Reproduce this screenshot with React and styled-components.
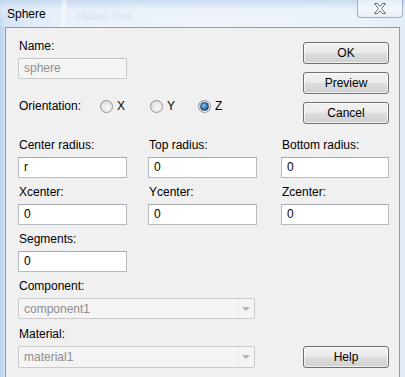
import styled, { createGlobalStyle } from "styled-components";

const Global = createGlobalStyle`
    html, body {
        margin: 0;
        padding: 0;
        background: #ffffff;
    }
    * {
        box-sizing: border-box;
    }
`

const Window = styled.div`
    width: 405px;
    height: 377px;
    overflow: hidden;
    display: flex;
    flex-direction: column;
    font-family: "Liberation Sans", Arial, sans-serif;
    font-size: 12px;
    color: #000;
    background: linear-gradient(90deg, #b9d2ee 0px, #cfe0f3 5px, #e6eff9 60px, #eef4fa 200px, #eaf1f9 360px, #e1ebf5 405px);
`

const TitleBar = styled.div`
    height: 27px;
    display: flex;
    align-items: center;
    padding-left: 7px;
    position: relative;
    background: linear-gradient(180deg, rgba(196, 215, 238, 0.9) 0px, rgba(232, 240, 250, 0.6) 9px, rgba(255, 255, 255, 0.1) 27px);
`

const Title = styled.span`
    font-size: 12px;
    color: #000;
    margin-top: 1px;
`

const Ghost = styled.span`
    margin-left: 32px;
    margin-top: 6px;
    font-size: 10px;
    color: #d3deeb;
    filter: blur(0.8px);
`

const GhostEdge = styled.div`
    position: absolute;
    left: 60px;
    top: 0;
    width: 8px;
    height: 27px;
    background: linear-gradient(90deg, rgba(255, 255, 255, 0), rgba(255, 255, 255, 0.6), rgba(255, 255, 255, 0));
`

const CloseButton = styled.div`
    margin-left: auto;
    margin-right: 2px;
    align-self: flex-start;
    width: 46px;
    height: 18px;
    border: 1px solid #9fb0c4;
    border-top: none;
    border-radius: 0 0 4px 4px;
    background: linear-gradient(180deg, #e4edf7 0%, #f3f7fb 50%, #e9eff7 100%);
    display: flex;
    align-items: center;
    justify-content: center;
`

const Frame = styled.div`
    flex: 1;
    display: flex;
    padding: 0 5px;
`

const Client = styled.div`
    flex: 1;
    background: #f0f0f0;
    border: 1px solid #8d9cae;
    border-bottom: none;
    padding: 11px 10px 0 12px;
    display: flex;
    flex-direction: column;
`

const TopSection = styled.div`
    display: flex;
    justify-content: space-between;
    height: 85px;
    margin-bottom: 14px;
`

const LeftColumn = styled.div`
    display: flex;
    flex-direction: column;
`

const Label = styled.div`
    height: 14px;
    line-height: 14px;
    padding-left: 1px;
    margin-bottom: ${(p) => p.$gap || 5}px;
    white-space: nowrap;
`

const TextBox = styled.div`
    width: ${(p) => p.$w || 109}px;
    height: 21px;
    line-height: 19px;
    padding-left: 5px;
    border: 1px solid ${(p) => (p.$disabled ? "#c9c9c9" : "#b5b9c0")};
    border-top-color: ${(p) => (p.$disabled ? "#c2c2c2" : "#a5a9b0")};
    border-radius: ${(p) => (p.$disabled ? "2px" : "0")};
    background: ${(p) => (p.$disabled ? "#f4f4f4" : "#ffffff")};
    color: ${(p) => (p.$disabled ? "#8e8e8e" : "#000")};
`

const OrientationRow = styled.div`
    display: flex;
    align-items: center;
    margin-top: 20px;
    height: 14px;
`

const OrientationLabel = styled.span`
    width: 82px;
    padding-left: 1px;
`

const RadioOption = styled.div`
    width: ${(p) => p.$w}px;
    display: flex;
    align-items: center;
    gap: 4px;
`

const RadioCircle = styled.span`
    width: 13px;
    height: 13px;
    border-radius: 50%;
    border: 1px solid #8f9295;
    background: radial-gradient(circle at 60% 65%, #fafafa 0%, #e6e6e6 55%, #cfcfcf 100%);
    display: flex;
    align-items: center;
    justify-content: center;

    &::after {
        content: "";
        display: ${(p) => (p.$checked ? "block" : "none")};
        width: 7px;
        height: 7px;
        border-radius: 50%;
        border: 1px solid #1c3f63;
        background: radial-gradient(circle at 40% 35%, #8cc3f0 0%, #2d74b5 55%, #154a7d 100%);
    }
`

const ButtonColumn = styled.div`
    display: flex;
    flex-direction: column;
    gap: 8px;
    margin-top: 3px;
`

const Button = styled.div`
    width: 86px;
    height: 22px;
    border: 1px solid #707070;
    border-radius: 3px;
    background: linear-gradient(180deg, #f2f2f2 0%, #ebebeb 48%, #dddddd 52%, #cfcfcf 100%);
    box-shadow: inset 0 0 0 1px rgba(255, 255, 255, 0.7);
    display: flex;
    align-items: center;
    justify-content: center;
    color: #000;
`

const FieldGrid = styled.div`
    display: grid;
    grid-template-columns: 130px 133px 108px;
    row-gap: 7px;
`

const Field = styled.div`
    display: flex;
    flex-direction: column;
`

const BottomSection = styled.div`
    display: flex;
    align-items: flex-end;
    justify-content: space-between;
    margin-top: 7px;
`

const ComboGroup = styled.div`
    display: flex;
    flex-direction: column;
`

const Combo = styled.div`
    width: 237px;
    height: ${(p) => p.$h || 21}px;
    margin-bottom: ${(p) => p.$mb || 0}px;
    border: 1px solid #c9c9c9;
    border-radius: 2px;
    background: #f4f4f4;
    color: #8e8e8e;
    display: flex;
    align-items: center;
`

const ComboText = styled.span`
    flex: 1;
    padding-left: 5px;
`

const ComboArrow = styled.span`
    width: 17px;
    height: 100%;
    display: flex;
    align-items: center;
    justify-content: center;
    border-left: 1px solid #ececec;

    &::after {
        content: "";
        border-left: 4px solid transparent;
        border-right: 4px solid transparent;
        border-top: 4px solid #b3b3b3;
    }
`

const radios = [
    { key: "X", w: 50 },
    { key: "Y", w: 48 },
    { key: "Z", w: 30, checked: true },
];

const fields = [
    { label: "Center radius:", value: "r" },
    { label: "Top radius:", value: "0" },
    { label: "Bottom radius:", value: "0" },
    { label: "Xcenter:", value: "0" },
    { label: "Ycenter:", value: "0" },
    { label: "Zcenter:", value: "0" },
    { label: "Segments:", value: "0" },
];

function App() {
    return (
        <Window>
            <Global />
            <TitleBar>
                <Title>Sphere</Title>
                <GhostEdge />
                <Ghost>History Tree</Ghost>
                <CloseButton>
                    <svg width="14" height="11" viewBox="0 0 14 11">
                        <path
                            d="M1.5 0.5 H4.5 L7 3.3 L9.5 0.5 H12.5 L8.6 5.5 L12.5 10.5 H9.5 L7 7.7 L4.5 10.5 H1.5 L5.4 5.5 Z"
                            fill="#f7f9fc"
                            stroke="#5e6f84"
                            strokeWidth="1"
                            strokeLinejoin="round"
                        />
                    </svg>
                </CloseButton>
            </TitleBar>
            <Frame>
                <Client>
                    <TopSection>
                        <LeftColumn>
                            <Label>Name:</Label>
                            <TextBox $disabled>sphere</TextBox>
                            <OrientationRow>
                                <OrientationLabel>Orientation:</OrientationLabel>
                                {radios.map((r) => (
                                    <RadioOption key={r.key} $w={r.w}>
                                        <RadioCircle $checked={r.checked} />
                                        {r.key}
                                    </RadioOption>
                                ))}
                            </OrientationRow>
                        </LeftColumn>
                        <ButtonColumn>
                            <Button>OK</Button>
                            <Button>Preview</Button>
                            <Button>Cancel</Button>
                        </ButtonColumn>
                    </TopSection>
                    <FieldGrid>
                        {fields.map((f, i) => (
                            <Field key={f.label}>
                                <Label>{f.label}</Label>
                                <TextBox $w={i % 3 === 2 ? 108 : 109}>{f.value}</TextBox>
                            </Field>
                        ))}
                    </FieldGrid>
                    <BottomSection>
                        <ComboGroup>
                            <Label>Component:</Label>
                            <Combo $mb={8}>
                                <ComboText>component1</ComboText>
                                <ComboArrow />
                            </Combo>
                            <Label>Material:</Label>
                            <Combo $h={22}>
                                <ComboText>material1</ComboText>
                                <ComboArrow />
                            </Combo>
                        </ComboGroup>
                        <Button>Help</Button>
                    </BottomSection>
                </Client>
            </Frame>
        </Window>
    );
}

export default App;
